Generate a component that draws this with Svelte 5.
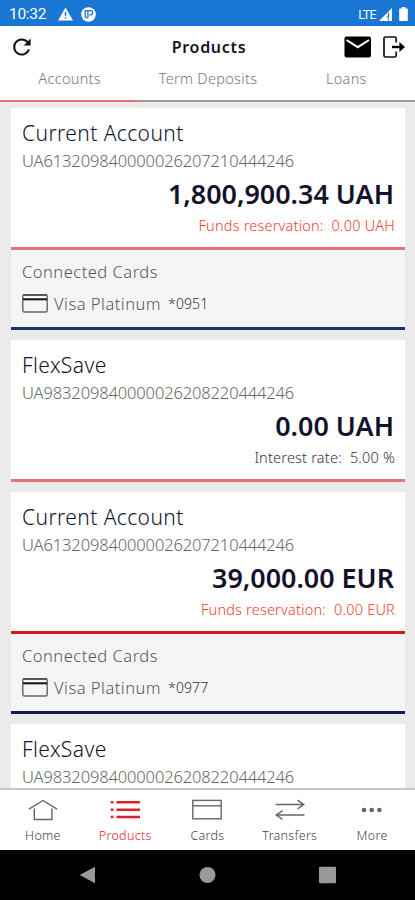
<script lang="ts">
  type Account = {
    name: string;
    iban: string;
    balance?: string;
    note?: string;
    amount?: string;
    reserved?: boolean;
    line: string;
    card?: string;
    cardLine?: string;
  };

  const tabs = ["Accounts", "Term Deposits", "Loans"];
  const nav = ["Home", "Products", "Cards", "Transfers", "More"];
  let activeTab = $state("Accounts");
  let activeNav = $state("Products");

  const accounts: Account[] = [
    {
      name: "Current Account",
      iban: "UA613209840000026207210444246",
      balance: "1,800,900.34 UAH",
      note: "Funds reservation:",
      amount: "0.00 UAH",
      reserved: true,
      line: "coral",
      card: "*0951",
      cardLine: "blue",
    },
    {
      name: "FlexSave",
      iban: "UA983209840000026208220444246",
      balance: "0.00 UAH",
      note: "Interest rate:",
      amount: "5.00 %",
      line: "coral",
    },
    {
      name: "Current Account",
      iban: "UA613209840000026207210444246",
      balance: "39,000.00 EUR",
      note: "Funds reservation:",
      amount: "0.00 EUR",
      reserved: true,
      line: "red",
      card: "*0977",
      cardLine: "navy",
    },
    {
      name: "FlexSave",
      iban: "UA983209840000026208220444246",
      line: "coral",
    },
  ];
</script>

<div class="phone">
  <div class="status">
    <span class="clock">10:32</span>
    <svg class="warn" width="15" height="14" viewBox="0 0 15 14">
      <path d="M7.5 0.5 15 13.5H0Z" fill="#fff" />
      <path d="M7.5 5v4M7.5 10.3v1.5" stroke="#1976d2" stroke-width="1.4" />
    </svg>
    <svg class="disc" width="15" height="15" viewBox="0 0 15 15">
      <circle cx="7.5" cy="7.5" r="7.3" fill="#fff" />
      <path d="M6.9 3.6H4.2v5.6a1.6 1.6 0 0 0 2.7 1.2ZM6.9 3.6h2.6a2.1 2.1 0 0 1 0 4.2H8.3" fill="none" stroke="#1976d2" stroke-width="1.3" />
    </svg>
    <span class="lte">LTE</span>
    <svg class="signal" width="13" height="13" viewBox="0 0 13 13">
      <path d="M13 0v13H0Z" fill="#fff" />
      <path d="M9.3 4.5v8M7.5 9.5l3-3" stroke="#1976d2" stroke-width="1" />
    </svg>
    <svg width="9" height="14" viewBox="0 0 9 14">
      <path d="M2.7 0h3.6v1.5H8.2a.6.6 0 0 1 .6.6v11.2a.6.6 0 0 1-.6.6H.8a.6.6 0 0 1-.6-.6V2.1a.6.6 0 0 1 .6-.6h1.9Z" fill="#fff" />
    </svg>
  </div>

  <header>
    <button class="refresh" aria-label="Refresh">
      <svg width="20" height="20" viewBox="0 0 20 20">
        <path d="M15.7 5.2A7.6 7.6 0 1 0 17 12.4" fill="none" stroke="#111" stroke-width="2" />
        <path d="M18.6 1.6V8.4H11.8Z" fill="#111" />
      </svg>
    </button>
    <h1>Products</h1>
    <div class="actions">
      <button aria-label="Messages">
        <svg width="28" height="22" viewBox="0 0 28 22">
          <rect x="0.5" y="0.5" width="26.5" height="21" rx="2" fill="#000" />
          <path d="M2.5 4 13.8 11.2 25 4" fill="none" stroke="#fff" stroke-width="2" />
        </svg>
      </button>
      <button aria-label="Log out">
        <svg width="23" height="22" viewBox="0 0 23 22">
          <path d="M13.2 6.5V2.6a1.6 1.6 0 0 0-1.6-1.6H2.6A1.6 1.6 0 0 0 1 2.6v16.8A1.6 1.6 0 0 0 2.6 21h9a1.6 1.6 0 0 0 1.6-1.6v-3.9" fill="none" stroke="#111" stroke-width="1.7" />
          <path d="M9 11h9" stroke="#000" stroke-width="2.4" />
          <path d="M16.4 6 22 11l-5.6 5Z" fill="#000" />
        </svg>
      </button>
    </div>
  </header>

  <div class="tabs">
    {#each tabs as tab (tab)}
      <button class="tab" class:active={tab === activeTab} onclick={() => (activeTab = tab)}>
        <span>{tab}</span>
      </button>
    {/each}
  </div>

  <main>
    {#each accounts as a}
      <section>
        <div class="account {a.line}">
          <h2>{a.name}</h2>
          <div class="iban">{a.iban}</div>
          {#if a.balance}
            <div class="balance">{a.balance}</div>
            <div class="note" class:reserved={a.reserved}>
              <span>{a.note}</span><span>{a.amount}</span>
            </div>
          {/if}
        </div>
        {#if a.card}
          <div class="connected {a.cardLine}">
            <div class="caption">Connected Cards</div>
            <div class="card">
              <svg width="26" height="19" viewBox="0 0 26 19">
                <rect x="0.8" y="0.8" width="24.4" height="17.2" rx="1.5" fill="none" stroke="#666" stroke-width="1.4" />
                <path d="M1 1.1h24" stroke="#444" stroke-width="1.4" />
                <path d="M1 5.3h24" stroke="#111" stroke-width="2" />
              </svg>
              <span class="kind">Visa Platinum</span>
              <span class="digits">{a.card}</span>
            </div>
          </div>
        {/if}
      </section>
    {/each}
  </main>

  <nav>
    {#each nav as item (item)}
      <button class="item" class:active={item === activeNav} onclick={() => (activeNav = item)}>
        <svg width="30" height="22" viewBox="0 0 30 22" fill="none" stroke="currentColor" stroke-width="1.4">
          {#if item === "Home"}
            <path d="M1 10.2 15 1.5 29 10.2M6.3 9.5v11h17.6v-11" />
          {:else if item === "Products"}
            <path d="M6.5 3.2h23.5M6.5 10.7h23.5M6.5 18h23.5" stroke-width="2.4" />
            <path d="M.8 3.2h2.6M.8 10.7h2.6M.8 18h2.6" stroke-width="2.4" />
          {:else if item === "Cards"}
            <rect x="0.8" y="1.4" width="28.4" height="18.4" />
            <path d="M1 6.8h28" />
          {:else if item === "Transfers"}
            <path d="M.6 5.5h28M22.5 1.2l6.3 4.3-6.3 4.3M29.5 16h-28M7.5 11.7 1.2 16l6.3 4.3" />
          {:else}
            <g fill="currentColor" stroke="none">
              <circle cx="7" cy="11" r="2.3" />
              <circle cx="14.7" cy="11" r="2.3" />
              <circle cx="22.4" cy="11" r="2.3" />
            </g>
          {/if}
        </svg>
        <span>{item}</span>
      </button>
    {/each}
  </nav>

  <div class="system">
    <svg width="17" height="18" viewBox="0 0 17 18"><path d="M16 .7v16.6L.7 9Z" fill="#999" /></svg>
    <svg width="17" height="18" viewBox="0 0 17 18"><circle cx="8.5" cy="9" r="8" fill="#999" /></svg>
    <svg width="17" height="18" viewBox="0 0 17 18"><rect y=".7" width="17" height="16.5" rx="1" fill="#999" /></svg>
  </div>
</div>

<style>
  :global(body) {
    margin: 0;
  }
  .phone {
    display: flex;
    flex-direction: column;
    width: 415px;
    height: 900px;
    overflow: hidden;
    background: #fff;
    color: #12132b;
    font-family: "Noto Sans", "Open Sans", sans-serif;
  }
  button {
    display: flex;
    padding: 0;
    border: none;
    background: none;
    font: inherit;
    color: inherit;
  }
  svg {
    display: block;
    flex: none;
  }
  .status {
    display: flex;
    align-items: center;
    flex: none;
    box-sizing: border-box;
    height: 26px;
    padding: 2px 7px 0 9px;
    background: #1976d2;
    color: #fff;
    font-family: Roboto, sans-serif;
  }
  .clock {
    width: 49px;
    font-size: 15.5px;
    letter-spacing: -0.3px;
  }
  .disc {
    margin-left: 8px;
  }
  .lte {
    margin-left: auto;
    font-size: 12.5px;
    letter-spacing: -0.6px;
  }
  .signal {
    margin: 0 7px 0 3px;
  }
  header {
    display: grid;
    grid-template-columns: 1fr auto 1fr;
    align-items: center;
    flex: none;
    height: 42px;
    padding: 0 9px 0 12px;
  }
  h1 {
    margin: 0;
    font-size: 16px;
    font-weight: 600;
    letter-spacing: 0.7px;
  }
  .actions {
    display: flex;
    justify-content: flex-end;
    gap: 11px;
  }
  .tabs {
    display: grid;
    grid-template-columns: repeat(3, 1fr);
    flex: none;
    height: 34px;
  }
  .tab {
    justify-content: center;
    padding-left: 1px;
    border-bottom: 2px solid #999;
    color: #777;
    font-size: 14.5px;
    font-weight: 300;
    line-height: 21px;
    letter-spacing: 0.3px;
  }
  .tab.active {
    border-color: #e57373;
  }
  main {
    display: flex;
    flex: 1;
    flex-direction: column;
    gap: 10px;
    min-height: 0;
    overflow: hidden;
    padding: 6px 10px 0 11px;
    background: #ebebeb;
  }
  section {
    flex: none;
  }
  .account,
  .connected {
    box-sizing: border-box;
    border-bottom: 3px solid;
  }
  .account {
    height: 142px;
    padding: 11px 11px 0;
    background: #fff;
  }
  .connected {
    height: 80px;
    padding: 10px 11px 0;
    background: #f5f5f5;
    color: #555;
    font-size: 16.5px;
    font-weight: 300;
    letter-spacing: 0.5px;
  }
  .coral {
    border-color: #e57373;
  }
  .red {
    border-color: #d3191c;
  }
  .blue {
    border-color: #173a63;
  }
  .navy {
    border-color: #17185a;
  }
  h2 {
    margin: 0;
    font-size: 21px;
    font-weight: 300;
    line-height: 28px;
    letter-spacing: 0.4px;
  }
  .iban {
    color: #666;
    font-size: 16.5px;
    font-weight: 300;
    line-height: 28px;
    letter-spacing: -0.14px;
  }
  .balance {
    font-size: 26.9px;
    font-weight: 600;
    line-height: 37px;
    text-align: right;
  }
  .note {
    display: flex;
    justify-content: flex-end;
    gap: 8px;
    margin-right: -1px;
    color: #333;
    font-size: 14.5px;
    font-weight: 300;
    line-height: 27px;
    letter-spacing: 0.2px;
  }
  .note.reserved {
    color: #f23c2b;
  }
  .caption {
    line-height: 24px;
  }
  .card {
    display: flex;
    align-items: center;
    height: 39px;
  }
  .kind {
    margin: 0 7px 0 6px;
  }
  .digits {
    color: #333;
    font-size: 14px;
    letter-spacing: 0.1px;
  }
  nav {
    display: grid;
    grid-template-columns: repeat(5, 82.3px);
    justify-content: center;
    flex: none;
    box-sizing: border-box;
    height: 62px;
    border-top: 2px solid #c8c8c8;
  }
  .item {
    flex-direction: column;
    align-items: center;
    padding-top: 9px;
    color: #444;
    font-size: 12.5px;
    font-weight: 300;
    line-height: 20px;
    letter-spacing: 0.3px;
  }
  .item svg {
    color: #666;
  }
  .item span {
    margin-top: 5px;
  }
  .item.active,
  .item.active svg {
    color: #dc2026;
  }
  .system {
    display: flex;
    align-items: center;
    justify-content: center;
    flex: none;
    gap: 103px;
    height: 50px;
    background: #000;
  }
</style>
